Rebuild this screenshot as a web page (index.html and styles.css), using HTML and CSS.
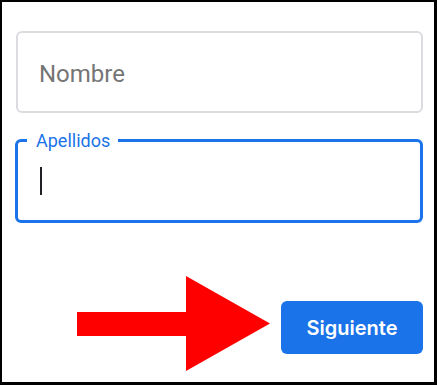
FILE: index.html
```html
<!DOCTYPE html>
<html>
<head>
  <title>Crear cuenta - Nombre</title>
  <link rel="stylesheet" href="styles.css">
</head>
<body>

  <div class="frame">
    <div class="field">
      <span class="placeholder">Nombre</span>
    </div>

    <div class="field focused">
      <span class="field-label">Apellidos</span>
      <span class="cursor"></span>
    </div>

    <div class="actions">
      <!-- red arrow pointing at the button -->
      <svg class="arrow" width="193" height="95" viewBox="0 0 193 95">
        <polygon points="0,36 109,36 109,0 193,47.5 109,95 109,60 0,60" fill="#ff0000"/>
      </svg>
      <button class="btn">Siguiente</button>
    </div>
  </div>

</body>
</html>
```

FILE: styles.css
```css
body {
  margin: 0;
  font-family: Roboto, "Liberation Sans", sans-serif;
  background: white;
}

.frame {
  width: 437px;
  height: 385px;
  box-sizing: border-box;
  border-style: solid;
  border-color: #000;
  border-width: 2px 3px 3px 2px;
  padding: 29px 11px 0 13px;
  overflow: hidden;
}

.field {
  height: 82px;
  box-sizing: border-box;
  margin-left: 1px;
  border: 2px solid #dadce0;
  border-radius: 6px;
  display: flex;
  align-items: center;
  padding-left: 21px;
  padding-top: 3px;
}

.placeholder {
  font-size: 24px;
  color: #757575;
}

/* focused input with floating label */
.field.focused {
  position: relative;
  height: 84px;
  margin-top: 26px;
  margin-left: 0;
  border: 3px solid #1a73e8;
  padding-left: 22px;
  padding-top: 0;
}

.field-label {
  position: absolute;
  top: -11px;
  left: 9px;
  padding: 0 8px 0 9px;
  background: white;
  font-size: 18px;
  line-height: 20px;
  color: #1a73e8;
}

.cursor {
  width: 2px;
  height: 28px;
  background: #202124;
}

.actions {
  display: flex;
  justify-content: flex-end;
  align-items: flex-start;
  gap: 11px;
  margin-top: 53px;
}

.arrow {
  display: block;
}

.btn {
  width: 142px;
  height: 53px;
  margin-top: 25px;
  background-color: #1a73e8;
  color: white;
  border: none;
  border-radius: 6px;
  font-family: Inter, "Noto Sans", sans-serif;
  font-weight: 600;
  font-size: 20px;
  cursor: pointer;
}
```
